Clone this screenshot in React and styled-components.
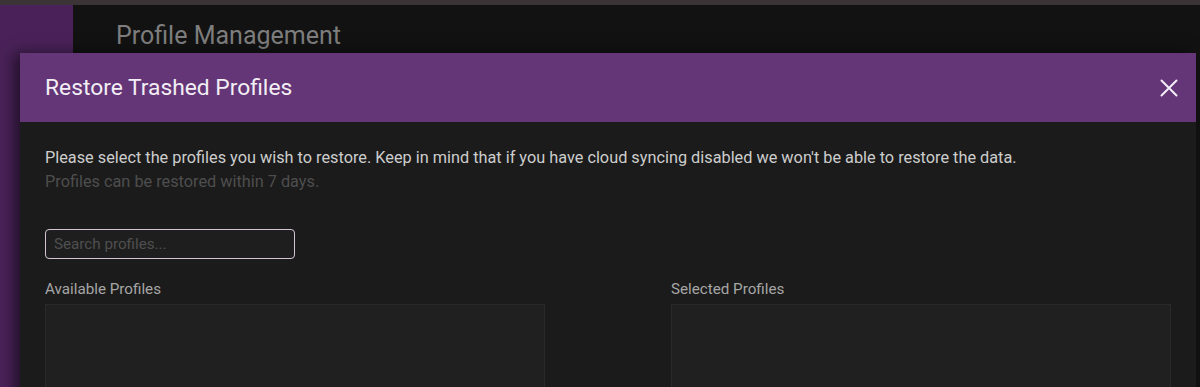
import React from "react";
import styled, { createGlobalStyle } from "styled-components";

const Global = createGlobalStyle`
  html, body { margin: 0; padding: 0; background: #121212; }
  body { font-family: Roboto, "Noto Sans", "Liberation Sans", sans-serif; overflow: hidden; }
  * { box-sizing: border-box; }
`;

const Page = styled.div`
  position: relative;
  width: 1200px;
  height: 387px;
  display: flex;
  flex-direction: column;
  background: #121212;
  overflow: hidden;
`;

const TopStrip = styled.div`
  height: 5px;
  flex: none;
  background: #3a3436;
`;

const Body = styled.div`
  flex: 1;
  display: flex;
`;

const Sidebar = styled.aside`
  width: 73px;
  flex: none;
  background: #4a2259;
`;

const Main = styled.main`
  flex: 1;
  padding: 16px 0 0 43px;
`;

const PageTitle = styled.h1`
  margin: 0;
  font-size: 25px;
  font-weight: 400;
  line-height: 30px;
  color: #7e7e7e;
`;

const Modal = styled.section`
  position: absolute;
  left: 20px;
  top: 53px;
  width: 1176px;
  height: 360px;
  background: #1b1b1b;
  box-shadow: -6px 0 14px rgba(0, 0, 0, 0.55);
  display: flex;
  flex-direction: column;
`;

const ModalHeader = styled.header`
  height: 69px;
  flex: none;
  background: #643677;
  display: flex;
  align-items: center;
  justify-content: space-between;
  padding: 0 14px 0 25px;
`;

const ModalTitle = styled.h2`
  margin: 0;
  font-size: 22.8px;
  font-weight: 400;
  color: #f2eef4;
`;

const CloseButton = styled.button`
  width: 26px;
  height: 26px;
  padding: 0;
  border: none;
  background: transparent;
  display: flex;
  align-items: center;
  justify-content: center;
  cursor: pointer;
`;

const ModalContent = styled.div`
  padding: 24px 25px 0;
  display: flex;
  flex-direction: column;
`;

const Text = styled.p`
  margin: 0;
  font-size: 16.3px;
  line-height: 24px;
  white-space: nowrap;
  color: ${(p) => (p.$muted ? "#4e4e4e" : "#cdcdcd")};
`;

const SearchInput = styled.input`
  margin-top: 35px;
  width: 250px;
  height: 30px;
  border: 1.5px solid #d4c4d2;
  border-radius: 4px;
  background: #1e1e1e;
  padding: 0 8px;
  font-family: inherit;
  font-size: 15.2px;
  color: #ddd;
  outline: none;
  &::placeholder { color: #4f4f4f; }
`;

const Columns = styled.div`
  margin-top: 20px;
  display: grid;
  grid-template-columns: 500px 500px;
  justify-content: space-between;
`;

const Column = styled.div`
  display: flex;
  flex-direction: column;
`;

const Label = styled.div`
  font-size: 15.2px;
  line-height: 20px;
  color: #a6a6a6;
  margin-bottom: 5px;
`;

const ListBox = styled.div`
  height: 150px;
  background: #202020;
  border: 1px solid #292929;
`;

export default function App() {
  return (
    <>
      <Global />
      <Page>
        <TopStrip />
        <Body>
          <Sidebar />
          <Main>
            <PageTitle>Profile Management</PageTitle>
          </Main>
        </Body>
        <Modal>
          <ModalHeader>
            <ModalTitle>Restore Trashed Profiles</ModalTitle>
            <CloseButton aria-label="Close">
              <svg width="18" height="18" viewBox="0 0 18 18">
                <path d="M1.5 1.5 L16.5 16.5 M16.5 1.5 L1.5 16.5" stroke="#f4eef6" strokeWidth="2" strokeLinecap="round" />
              </svg>
            </CloseButton>
          </ModalHeader>
          <ModalContent>
            <Text>
              Please select the profiles you wish to restore. Keep in mind that if you have cloud syncing disabled we won't be able to restore the data.
            </Text>
            <Text $muted>Profiles can be restored within 7 days.</Text>
            <SearchInput placeholder="Search profiles..." />
            <Columns>
              <Column>
                <Label>Available Profiles</Label>
                <ListBox />
              </Column>
              <Column>
                <Label>Selected Profiles</Label>
                <ListBox />
              </Column>
            </Columns>
          </ModalContent>
        </Modal>
      </Page>
    </>
  );
}
